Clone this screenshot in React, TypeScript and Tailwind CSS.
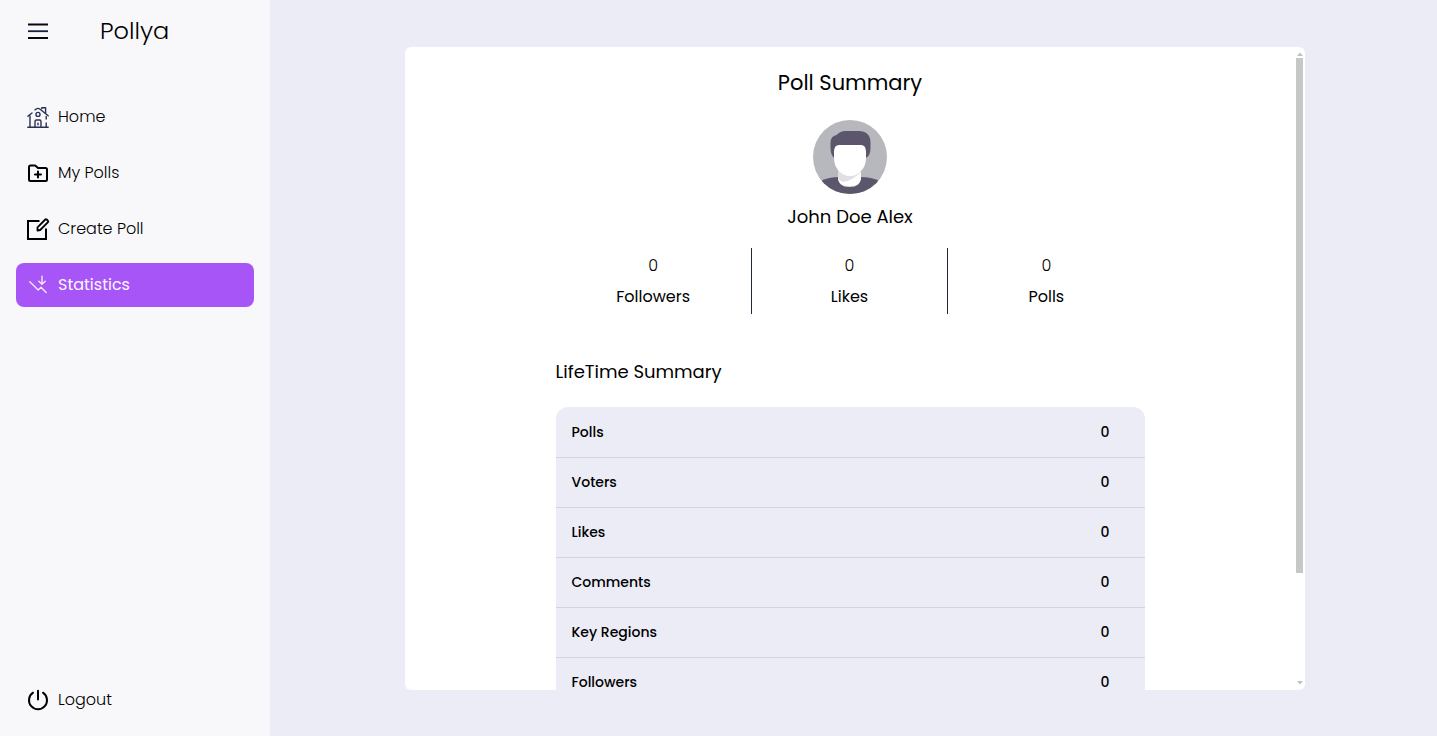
import { useEffect, useRef, useState } from "react";
import type { ReactNode } from "react";

function MenuIcon() {
  return (
    <svg viewBox="0 0 24 24" className="size-6" fill="none" strokeWidth="1.8" aria-hidden="true">
      <path d="M2 5.5h20M2 19h20" stroke="#08080c" />
      <path d="M2 12.2h20" stroke="#17223b" />
    </svg>
  );
}

function HomeIcon() {
  return (
    <svg viewBox="0 0 24 24" className="size-6" fill="none" stroke="#2b3150" strokeWidth="1.4" strokeLinecap="round" strokeLinejoin="round" aria-hidden="true">
      <path d="M1.800 22.200h20.400M4 11v11M20.200 18v4M1.800 11.200l4.200-3.200M9 4.800l1.200-.8q1.800-1.200 3.600 0l8.400 6.800M15.800 3.600V2.800h3.800v5.400M20.200 11.500v2.500M9 22v-5.600q0-1.400 1.400-1.400h3.200q1.400 0 1.400 1.400V22M12 18.200v1.600" />
      <circle cx="12" cy="9.4" r="2" />
    </svg>
  );
}

function FolderPlusIcon() {
  return (
    <svg viewBox="0 0 24 24" className="size-6" fill="none" stroke="black" strokeWidth="2" strokeLinecap="round" strokeLinejoin="round" aria-hidden="true">
      <path d="M4.500 4.500h4.700l2.800 2.500h7.500q1.500 0 1.500 1.500v10q0 1.500-1.500 1.500h-15Q3 20 3 18.500V6q0-1.500 1.500-1.500z" />
      <path d="M12 10.500v6M9 13.500h6" />
    </svg>
  );
}

function EditIcon() {
  return (
    <svg viewBox="0 0 24 24" className="size-6" fill="none" stroke="black" strokeWidth="2" aria-hidden="true">
      <path d="M13.500 4H2v18h18V11.500" />
      <path d="M11.500 13.500v-3.200l7.800-7.800q.7-.7 1.400 0l1.300 1.300q.7.7 0 1.400l-7.800 7.800z" strokeWidth="1.800" strokeLinejoin="round" />
    </svg>
  );
}

function StatisticsIcon() {
  return (
    <svg viewBox="0 0 24 24" className="size-6" fill="none" stroke="#f3e8ff" strokeWidth="1.4" strokeLinecap="round" strokeLinejoin="round" aria-hidden="true">
      <path d="M3.800 8.800l8.400 8.200 2.800-2.700 5.200 5.200M16 3.200v7.800M12.800 8.200l3.200 3 3.200-3" />
    </svg>
  );
}

function PowerIcon() {
  return (
    <svg viewBox="0 0 24 24" className="size-6" fill="none" stroke="black" strokeWidth="2" strokeLinecap="round" aria-hidden="true">
      <path d="M12 2.800v8.700M7 4.700a9 9 0 1 0 10 0" />
    </svg>
  );
}

function Avatar() {
  return (
    <svg viewBox="0 0 74 74" className="size-[74px]" role="img" aria-label="John Doe Alex">
      <defs>
        <clipPath id="portrait">
          <circle cx="37" cy="37" r="37" />
        </clipPath>
      </defs>
      <g clipPath="url(#portrait)">
        <path fill="#b7b7be" d="M0 0h74v74H0z" />
        <path fill="#5b566b" d="M8 61q7-4 19-4h20q12 0 19 4v13H8z" />
        <path fill="#e0e0e4" d="M25 50h23v7q0 10-11.500 10T25 57z" />
        <path fill="white" d="M25 57q1 4 5 5 9-1 18-10v5q0 9-11.500 9T25 57z" />
        <path fill="#5b566b" d="M17.500 23q0-7 6-8 4-4 9-4h13q12 0 12 12v5q0 8-5 10H21q-3.500-4-3.500-10z" />
        <path fill="white" d="M21 32q0-7 5-7h22q5 0 5 7v6q0 9-6 14-4 4-10 4t-10-4q-6-5-6-14z" />
      </g>
    </svg>
  );
}

function NavItem({ icon, label, active = false }: { icon: ReactNode; label: string; active?: boolean }) {
  return (
    <a
      href="#"
      aria-current={active ? "page" : undefined}
      className={
        active
          ? "flex h-11 items-center gap-2 rounded-lg bg-[#a855f7] px-2.5 text-purple-50"
          : "flex h-11 items-center gap-2 rounded-lg px-2.5 font-light text-black"
      }
    >
      {icon}
      <span>{label}</span>
    </a>
  );
}

const stats = ["Followers", "Likes", "Polls"];
const lifetime = ["Polls", "Voters", "Likes", "Comments", "Key Regions", "Followers"];

function ScrollPanel({ children }: { children: ReactNode }) {
  const ref = useRef<HTMLDivElement>(null);
  const [thumb, setThumb] = useState({ top: 0, height: 100 });

  const update = () => {
    const el = ref.current;
    if (!el) return;
    setThumb({
      top: (el.scrollTop / el.scrollHeight) * 100,
      height: (el.clientHeight / el.scrollHeight) * 100,
    });
  };

  useEffect(() => {
    update();
    window.addEventListener("resize", update);
    return () => window.removeEventListener("resize", update);
  }, []);

  return (
    <section className="flex min-h-0 w-full max-w-[900px] flex-1 overflow-hidden rounded-md bg-white">
      <div ref={ref} onScroll={update} className="min-w-0 flex-1 overflow-y-auto [scrollbar-width:none]">
        {children}
      </div>
      <div className="flex w-2.5 flex-col items-center py-1 pr-px" aria-hidden="true">
        <svg viewBox="0 0 6 6" className="mb-px size-1.5" fill="#c1c1c1">
          <path d="M3 1.500L6 5H0z" />
        </svg>
        <div className="min-h-0 w-[7px] flex-1">
          <div style={{ height: `${thumb.top}%` }} />
          <div style={{ height: `${thumb.height}%` }} className="bg-[#c6c8c8]" />
        </div>
        <svg viewBox="0 0 6 6" className="size-1.5" fill="#c1c1c1">
          <path d="M3 4.500L6 1H0z" />
        </svg>
      </div>
    </section>
  );
}

export default function App() {
  return (
    <div className="flex h-screen bg-[#ebecf6] font-[Poppins,Inter,sans-serif] text-base text-black">
      <aside className="flex w-[270px] shrink-0 flex-col bg-[#f8f8fb] px-4 pb-3.5">
        <header className="flex h-[62px] items-center gap-[50px] pl-2.5">
          <button type="button" aria-label="Toggle menu">
            <MenuIcon />
          </button>
          <h1 className="text-2xl font-light">Pollya</h1>
        </header>
        <nav className="mt-[33px] flex flex-1 flex-col gap-3" aria-label="Main">
          <NavItem icon={<HomeIcon />} label="Home" />
          <NavItem icon={<FolderPlusIcon />} label="My Polls" />
          <NavItem icon={<EditIcon />} label="Create Poll" />
          <NavItem icon={<StatisticsIcon />} label="Statistics" active />
        </nav>
        <button type="button" className="flex h-11 items-center gap-2 px-2.5 font-light">
          <PowerIcon />
          <span>Logout</span>
        </button>
      </aside>

      <main className="flex min-w-0 flex-1 flex-col items-center pt-[47px] pr-4 pb-[46px] pl-[19px]">
        <ScrollPanel>
          <div className="flex flex-col items-center px-4 pt-5 pb-[117px]">
            <h2 className="text-[21px] leading-8">Poll Summary</h2>
            <div className="mt-[21px]">
              <Avatar />
            </div>
            <p className="mt-[9px] text-lg leading-7">John Doe Alex</p>
            <dl className="mt-[17px] grid w-full max-w-[589px] grid-cols-3 divide-x divide-gray-800 text-center">
              {stats.map((label) => (
                <div key={label} className="flex h-[66px] flex-col-reverse justify-center gap-[7px]">
                  <dt>{label}</dt>
                  <dd className="font-light">0</dd>
                </div>
              ))}
            </dl>
            <div className="mt-11 w-full max-w-[589px]">
              <h3 className="text-lg leading-7">LifeTime Summary</h3>
              <div className="mt-[21px] overflow-hidden rounded-xl bg-[#ebecf6]">
                <table className="w-full border-collapse text-sm font-medium" aria-label="LifeTime Summary">
                  <tbody>
                    {lifetime.map((label) => (
                      <tr key={label} className="h-[50px] border-b border-gray-300 last:border-b-0">
                        <th scope="row" className="px-4 text-left font-medium">
                          {label}
                        </th>
                        <td className="pr-[35px] text-right">0</td>
                      </tr>
                    ))}
                  </tbody>
                </table>
              </div>
            </div>
          </div>
        </ScrollPanel>
      </main>
    </div>
  );
}
